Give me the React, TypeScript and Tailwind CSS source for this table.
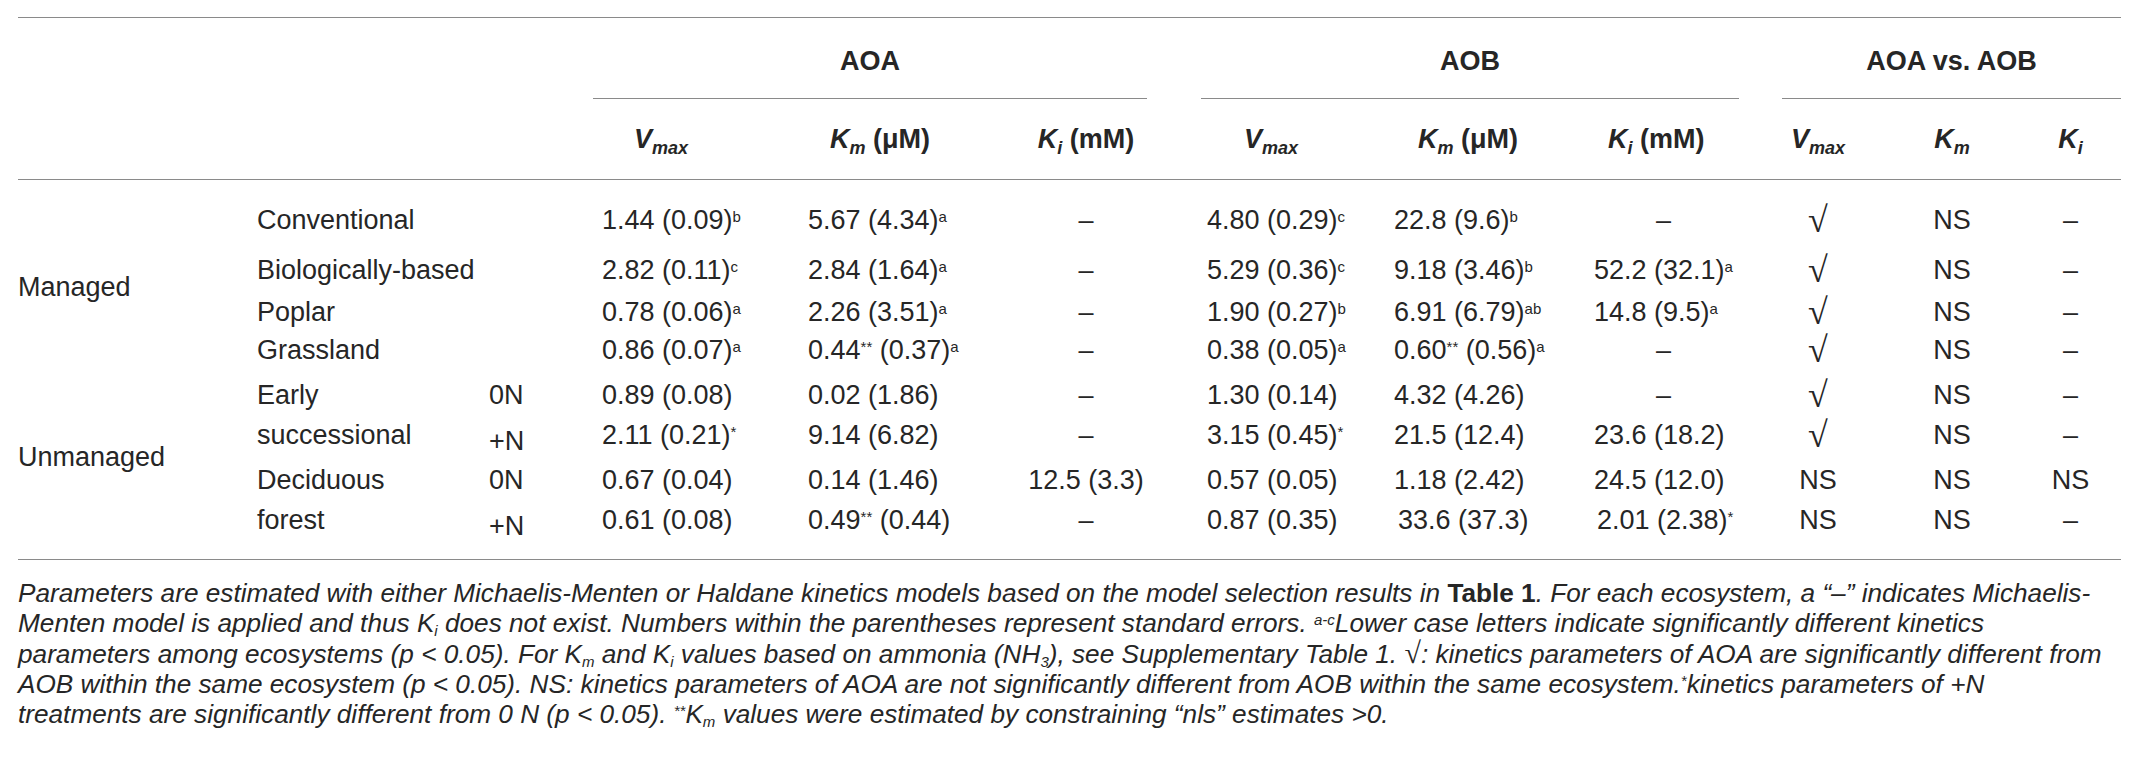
import React from "react";

const Sup = ({ children }: { children: React.ReactNode }) => (
  <sup className="text-[15px]">{children}</sup>
);

const Dash = () => <span>–</span>;

const Root = () => (
  <span className="font-['Liberation_Serif',serif] text-[36px] leading-[40px]">√</span>
);

type Row = {
  eco: React.ReactNode;
  n: string;
  cells: React.ReactNode[];
};

const rows: Row[] = [
  {
    eco: "Conventional",
    n: "",
    cells: [
      <>1.44 (0.09)<Sup>b</Sup></>,
      <>5.67 (4.34)<Sup>a</Sup></>,
      <Dash />,
      <>4.80 (0.29)<Sup>c</Sup></>,
      <>22.8 (9.6)<Sup>b</Sup></>,
      null,
      <Root />,
      "NS",
      <Dash />,
    ],
  },
  {
    eco: "Biologically-based",
    n: "",
    cells: [
      <>2.82 (0.11)<Sup>c</Sup></>,
      <>2.84 (1.64)<Sup>a</Sup></>,
      <Dash />,
      <>5.29 (0.36)<Sup>c</Sup></>,
      <>9.18 (3.46)<Sup>b</Sup></>,
      <>52.2 (32.1)<Sup>a</Sup></>,
      <Root />,
      "NS",
      <Dash />,
    ],
  },
  {
    eco: "Poplar",
    n: "",
    cells: [
      <>0.78 (0.06)<Sup>a</Sup></>,
      <>2.26 (3.51)<Sup>a</Sup></>,
      <Dash />,
      <>1.90 (0.27)<Sup>b</Sup></>,
      <>6.91 (6.79)<Sup>ab</Sup></>,
      <>14.8 (9.5)<Sup>a</Sup></>,
      <Root />,
      "NS",
      <Dash />,
    ],
  },
  {
    eco: "Grassland",
    n: "",
    cells: [
      <>0.86 (0.07)<Sup>a</Sup></>,
      <>0.44<Sup>**</Sup> (0.37)<Sup>a</Sup></>,
      <Dash />,
      <>0.38 (0.05)<Sup>a</Sup></>,
      <>0.60<Sup>**</Sup> (0.56)<Sup>a</Sup></>,
      null,
      <Root />,
      "NS",
      <Dash />,
    ],
  },
  {
    eco: "Early",
    n: "0N",
    cells: [
      "0.89 (0.08)",
      "0.02 (1.86)",
      <Dash />,
      "1.30 (0.14)",
      "4.32 (4.26)",
      null,
      <Root />,
      "NS",
      <Dash />,
    ],
  },
  {
    eco: "successional",
    n: "+N",
    cells: [
      <>2.11 (0.21)<Sup>*</Sup></>,
      "9.14 (6.82)",
      <Dash />,
      <>3.15 (0.45)<Sup>*</Sup></>,
      "21.5 (12.4)",
      "23.6 (18.2)",
      <Root />,
      "NS",
      <Dash />,
    ],
  },
  {
    eco: "Deciduous",
    n: "0N",
    cells: [
      "0.67 (0.04)",
      "0.14 (1.46)",
      "12.5 (3.3)",
      "0.57 (0.05)",
      "1.18 (2.42)",
      "24.5 (12.0)",
      "NS",
      "NS",
      "NS",
    ],
  },
  {
    eco: "forest",
    n: "+N",
    cells: [
      "0.61 (0.08)",
      <>0.49<Sup>**</Sup> (0.44)</>,
      <Dash />,
      "0.87 (0.35)",
      <span className="pl-[4px]">33.6 (37.3)</span>,
      <span className="pl-[3px]">2.01 (2.38)<Sup>*</Sup></span>,
      "NS",
      "NS",
      <Dash />,
    ],
  },
];

const rowHeights = [
  "h-[50px]",
  "h-[42px]",
  "h-[38px]",
  "h-[45px]",
  "h-[40px]",
  "h-[45px]",
  "h-[40px]",
  "h-[40px]",
];

const cols =
  "grid grid-cols-[239px_232px_113px_206px_202px_152px_232px_200px_158px_132px_136px_101px]";

const Line = () => <div className="h-px w-full bg-[#8a8a8a]" />;

const Sub = ({ children }: { children: React.ReactNode }) => (
  <i className="relative top-[6px] text-[18px]">{children}</i>
);

export default function App() {
  return (
    <div className="min-h-[772px] w-[2138px] bg-white font-['Liberation_Sans',Arial,sans-serif] text-[#262626]">
      <div className="ml-[18px] w-[2103px] pt-[17px]">
        <Line />
        {/* group header row */}
        <div className="flex h-[81px] text-[27px] font-bold">
          <div className="w-[575px]" />
          <div className="flex w-[554px] flex-col">
            <div className="flex flex-1 items-center justify-center pt-[6px]">AOA</div>
            <Line />
          </div>
          <div className="w-[54px]" />
          <div className="flex w-[538px] flex-col">
            <div className="flex flex-1 items-center justify-center pt-[6px]">AOB</div>
            <Line />
          </div>
          <div className="w-[43px]" />
          <div className="flex w-[339px] flex-col">
            <div className="flex flex-1 items-center justify-center pt-[6px]">AOA vs. AOB</div>
            <Line />
          </div>
        </div>
        {/* sub header row */}
        <div className={`${cols} h-[80px] items-center text-[27px] font-bold`}>
          <div />
          <div />
          <div />
          <div className="pl-[32px]">
            <i>V</i>
            <Sub>max</Sub>
          </div>
          <div className="pl-[22px]">
            <i>K</i>
            <Sub>m</Sub> (μM)
          </div>
          <div className="text-center">
            <i>K</i>
            <Sub>i</Sub> (mM)
          </div>
          <div className="pl-[82px]">
            <i>V</i>
            <Sub>max</Sub>
          </div>
          <div className="pl-[24px]">
            <i>K</i>
            <Sub>m</Sub> (μM)
          </div>
          <div className="pl-[14px]">
            <i>K</i>
            <Sub>i</Sub> (mM)
          </div>
          <div className="text-center">
            <i>V</i>
            <Sub>max</Sub>
          </div>
          <div className="text-center">
            <i>K</i>
            <Sub>m</Sub>
          </div>
          <div className="text-center">
            <i>K</i>
            <Sub>i</Sub>
          </div>
        </div>
        <Line />
        {/* body */}
        <div className="mt-[20px] mb-[19px] text-[27px]">
          <div className={`${cols} grid-rows-[50px_42px_38px_45px_40px_45px_40px_40px]`}>
            <div className="col-start-1 row-span-4 row-start-1 flex items-center">Managed</div>
            <div className="col-start-1 row-span-4 row-start-5 flex items-center">Unmanaged</div>
            {rows.map((r, i) => (
              <React.Fragment key={i}>
                <div
                  className={`col-start-2 ${rowHeights[i]} whitespace-nowrap leading-[40px]`}
                  style={{ gridRowStart: i + 1 }}
                >
                  {r.eco}
                </div>
                <div
                  className={`col-start-3 leading-[40px] ${r.n === "+N" ? "pt-[6px]" : ""}`}
                  style={{ gridRowStart: i + 1 }}
                >
                  {r.n}
                </div>
                {r.cells.map((c, j) => {
                  let cls = "whitespace-nowrap leading-[40px]";
                  if (j === 2 || j >= 6) cls += " text-center";
                  if (j === 3) cls += " pl-[45px]";
                  return (
                    <div
                      key={j}
                      className={cls}
                      style={{ gridRowStart: i + 1, gridColumnStart: j + 4 }}
                    >
                      {j === 5 && c === null ? <span className="pl-[62px]">–</span> : c}
                    </div>
                  );
                })}
              </React.Fragment>
            ))}
          </div>
        </div>
        <Line />
        {/* footnote */}
        <div className="mt-[18px] whitespace-nowrap text-[26.2px] italic leading-[30px]">
          <div>
            Parameters are estimated with either Michaelis-Menten or Haldane kinetics models based on the model selection results in{" "}
            <b className="not-italic">Table 1</b>. For each ecosystem, a “–” indicates Michaelis-
          </div>
          <div>
            Menten model is applied and thus K<sub className="text-[15px]">i</sub> does not exist. Numbers within the parentheses represent standard errors.{" "}
            <sup className="text-[15px]">a-c</sup>Lower case letters indicate significantly different kinetics
          </div>
          <div>
            parameters among ecosystems (p &lt; 0.05). For K<sub className="text-[15px]">m</sub> and K
            <sub className="text-[15px]">i</sub> values based on ammonia (NH<sub className="text-[15px]">3</sub>), see Supplementary Table 1.{" "}
            <span className="font-['Liberation_Serif',serif] text-[30px] not-italic">√</span>: kinetics parameters of AOA are significantly different from
          </div>
          <div>
            AOB within the same ecosystem (p &lt; 0.05). NS: kinetics parameters of AOA are not significantly different from AOB within the same ecosystem.
            <sup className="text-[15px]">*</sup>kinetics parameters of +N
          </div>
          <div>
            treatments are significantly different from 0 N (p &lt; 0.05). <sup className="text-[15px]">**</sup>K
            <sub className="text-[15px]">m</sub> values were estimated by constraining “nls” estimates &gt;0.
          </div>
        </div>
      </div>
    </div>
  );
}
